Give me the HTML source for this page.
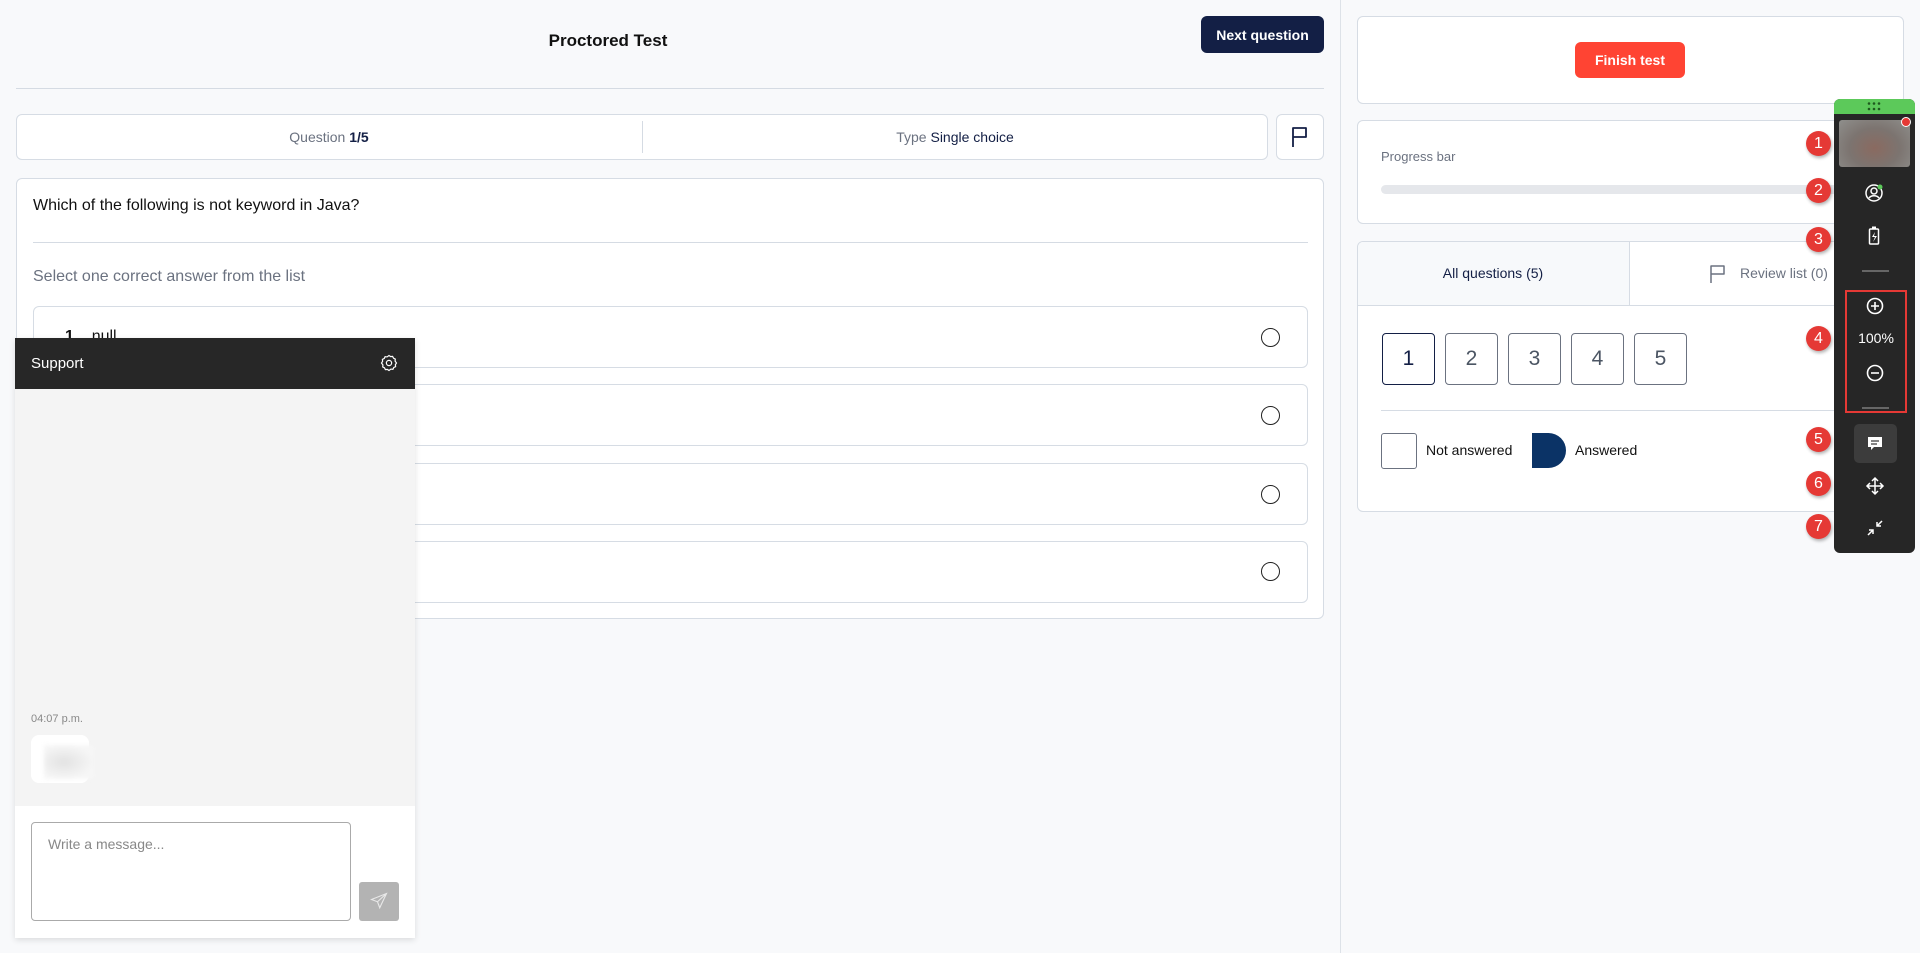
<!DOCTYPE html>
<html><head><meta charset="utf-8"><style>
*{box-sizing:border-box;margin:0;padding:0}
body{width:1920px;height:953px;overflow:hidden;background:#f8f9fb;font-family:"Liberation Sans",Arial,sans-serif;position:relative;color:#111}
.a{position:absolute}
.card{position:absolute;background:#fff;border:1px solid #d6dce4;border-radius:6px}
.radio{position:absolute;left:1261px;width:19px;height:19px;border:1.5px solid #222;border-radius:50%}
.nb{position:absolute;top:333px;width:53px;height:52px;border:1.5px solid #6b7280;border-radius:4px;display:flex;align-items:center;justify-content:center;font-size:21px;color:#4b5563}
.badge{position:absolute;left:1806px;width:25px;height:25px;border-radius:50%;background:#e53935;color:#fff;font-size:16px;display:flex;align-items:center;justify-content:center;box-shadow:1px 2px 3px rgba(0,0,0,.3)}
</style></head><body>
<div class="a" style="left:1340px;top:0;width:1px;height:953px;background:#dde2e8"></div>
<div class="a" style="left:0;width:1216px;top:31px;text-align:center;font-size:17px;font-weight:bold">Proctored Test</div>
<div class="a" style="left:1201px;top:16px;width:123px;height:37px;background:#131f45;border-radius:6px;color:#fff;font-size:14px;font-weight:bold;display:flex;align-items:center;justify-content:center">Next question</div>
<div class="a" style="left:16px;top:88px;width:1308px;height:1px;background:#d5dbe3"></div>

<div class="card" style="left:16px;top:114px;width:1252px;height:46px"></div>
<div class="a" style="left:642px;top:121px;width:1px;height:32px;background:#d5dbe3"></div>
<div class="a" style="left:16px;width:626px;top:129px;text-align:center;font-size:14px;color:#6b7280">Question <span style="color:#131f45;font-weight:bold">1/5</span></div>
<div class="a" style="left:642px;width:626px;top:129px;text-align:center;font-size:14px;color:#6b7280">Type <span style="color:#131f45">Single choice</span></div>
<div class="card" style="left:1276px;top:114px;width:48px;height:46px"></div>
<svg class="a" style="left:1290px;top:126px" width="20" height="22" viewBox="0 0 20 22"><path d="M3 21V2h13v9H3" fill="none" stroke="#131f45" stroke-width="1.8" stroke-linejoin="round"/></svg>

<div class="card" style="left:16px;top:178px;width:1308px;height:441px"></div>
<div class="a" style="left:33px;top:197px;font-size:16px;color:#111">Which of the following is not keyword in Java?</div>
<div class="a" style="left:33px;top:242px;width:1275px;height:1px;background:#d5dbe3"></div>
<div class="a" style="left:33px;top:268px;font-size:16px;color:#6b7280">Select one correct answer from the list</div>
<div class="card" style="left:33px;top:306px;width:1275px;height:62px"></div>
<div class="card" style="left:33px;top:384px;width:1275px;height:62px"></div>
<div class="card" style="left:33px;top:463px;width:1275px;height:62px"></div>
<div class="card" style="left:33px;top:541px;width:1275px;height:62px"></div>
<div class="a" style="left:65px;top:328px;font-size:16px"><b>1</b>&nbsp;&nbsp;&nbsp;&nbsp;null</div>
<div class="radio" style="top:328px"></div>
<div class="radio" style="top:406px"></div>
<div class="radio" style="top:485px"></div>
<div class="radio" style="top:562px"></div>

<!-- support -->
<div class="a" style="left:15px;top:338px;width:400px;height:600px;background:#f4f4f4;box-shadow:0 2px 6px rgba(0,0,0,.12)"></div>
<div class="a" style="left:15px;top:338px;width:400px;height:51px;background:#272727"></div>
<div class="a" style="left:31px;top:355px;color:#fff;font-size:15px">Support</div>
<svg class="a" style="left:380px;top:354px" width="18" height="18" viewBox="0 0 24 24" fill="none" stroke="#fff" stroke-width="1.6"><path d="M12 2l2.2 1.5 2.6-.3 1.2 2.4 2.4 1.2-.3 2.6L22 12l-1.5 2.2.3 2.6-2.4 1.2-1.2 2.4-2.6-.3L12 22l-2.2-1.5-2.6.3-1.2-2.4-2.4-1.2.3-2.6L2 12l1.5-2.2-.3-2.6 2.4-1.2 1.2-2.4 2.6.3z"/><circle cx="12" cy="12" r="3.5"/></svg>
<div class="a" style="left:31px;top:713px;font-size:11px;color:#888">04:07 p.m.</div>
<div class="a" style="left:31px;top:735px;width:58px;height:48px;background:#fff;border-radius:8px"></div>
<div class="a" style="left:44px;top:745px;width:50px;height:34px;background:radial-gradient(ellipse at 40% 50%,#e2e2e2,#f6f6f6 70%);filter:blur(2px)"></div>
<div class="a" style="left:15px;top:806px;width:400px;height:132px;background:#fff"></div>
<div class="a" style="left:31px;top:822px;width:320px;height:99px;border:1px solid #aaa;border-radius:4px"></div>
<div class="a" style="left:48px;top:836px;font-size:14px;color:#888">Write a message...</div>
<div class="a" style="left:359px;top:882px;width:40px;height:39px;background:#b3b3b3;border-radius:3px"></div>
<svg class="a" style="left:370px;top:892px" width="18" height="18" viewBox="0 0 24 24" fill="none" stroke="#e8e8e8" stroke-width="1.5"><path d="M22 2L2 10l8 3 3 8zM10 13l12-11"/></svg>

<!-- right -->
<div class="card" style="left:1357px;top:16px;width:547px;height:88px"></div>
<div class="a" style="left:1575px;top:42px;width:110px;height:36px;background:#ff4433;border-radius:6px;color:#fff;font-weight:bold;font-size:14px;display:flex;align-items:center;justify-content:center">Finish test</div>
<div class="card" style="left:1357px;top:120px;width:547px;height:104px"></div>
<div class="a" style="left:1381px;top:149px;font-size:13px;color:#6b7280">Progress bar</div>
<div class="a" style="left:1381px;top:185px;width:500px;height:9px;background:#e5e7eb;border-radius:5px"></div>
<div class="card" style="left:1357px;top:241px;width:547px;height:271px;overflow:hidden">
<div class="a" style="left:0;top:0;width:272px;height:64px;background:#f7f9fb;border-right:1px solid #d6dce4;border-bottom:1px solid #d6dce4"></div>
<div class="a" style="left:272px;top:63px;width:280px;height:1px;background:#d6dce4"></div>
</div>
<div class="a" style="left:1357px;width:272px;top:265px;text-align:center;font-size:14px;color:#131f45">All questions (5)</div>
<svg class="a" style="left:1709px;top:264px" width="18" height="20" viewBox="0 0 18 20"><path d="M2 19V2h13v8H2" fill="none" stroke="#6b7280" stroke-width="1.5" stroke-linejoin="round"/></svg>
<div class="a" style="left:1740px;top:265px;font-size:14px;color:#6b7280">Review list (0)</div>
<div class="nb" style="left:1382px;border-color:#131f45;color:#131f45">1</div>
<div class="nb" style="left:1445px">2</div>
<div class="nb" style="left:1508px">3</div>
<div class="nb" style="left:1571px">4</div>
<div class="nb" style="left:1634px">5</div>
<div class="a" style="left:1381px;top:410px;width:523px;height:1px;background:#d6dce4"></div>
<div class="a" style="left:1381px;top:433px;width:36px;height:36px;border:1px solid #6b7280;border-radius:3px"></div>
<div class="a" style="left:1426px;top:442px;font-size:14px;color:#111">Not answered</div>
<div class="a" style="left:1532px;top:433px;width:34px;height:35px;background:#0b3366;border-radius:0 18px 18px 0"></div>
<div class="a" style="left:1575px;top:442px;font-size:14px;color:#111">Answered</div>

<!-- toolbar -->
<div class="a" style="left:1834px;top:99px;width:81px;height:454px;background:#262626;border-radius:6px;overflow:hidden">
<div style="height:15px;background:#5cc95a"></div></div>
<svg class="a" style="left:1866px;top:101px" width="16" height="11"><g fill="#1e5a1e"><circle cx="3" cy="2.5" r="1.3"/><circle cx="8" cy="2.5" r="1.3"/><circle cx="13" cy="2.5" r="1.3"/><circle cx="3" cy="8" r="1.3"/><circle cx="8" cy="8" r="1.3"/><circle cx="13" cy="8" r="1.3"/></g></svg>
<div class="a" style="left:1839px;top:120px;width:71px;height:47px;border-radius:3px;background:radial-gradient(ellipse at 50% 60%,#8a6a60,#7c7470 50%,#8f8f8c)"></div>
<div class="a" style="left:1901px;top:117px;width:10px;height:10px;border-radius:50%;background:#e53935;border:1.5px solid #fff"></div>
<svg class="a" style="left:1864px;top:183px" width="20" height="20" viewBox="0 0 20 20" fill="none" stroke="#fff" stroke-width="1.5"><circle cx="10" cy="10" r="8"/><circle cx="10" cy="8" r="3"/><path d="M5 15c2-3 8-3 10 0"/><circle cx="16" cy="4" r="2.5" fill="#5cc95a" stroke="none"/></svg>
<svg class="a" style="left:1868px;top:226px" width="12" height="20" viewBox="0 0 12 20"><rect x="4" y="0.5" width="4" height="2" fill="#fff"/><rect x="1.5" y="3" width="9" height="15" rx="1" fill="none" stroke="#fff" stroke-width="1.5"/><path d="M7 6L4 11h3l-2 5 4-6H6z" fill="#fff"/></svg>
<div class="a" style="left:1862px;top:270px;width:27px;height:2px;background:#666"></div>
<div class="a" style="left:1845px;top:290px;width:62px;height:123px;border:2px solid #e53935"></div>
<svg class="a" style="left:1866px;top:297px" width="18" height="18" viewBox="0 0 18 18" fill="none" stroke="#fff" stroke-width="1.6"><circle cx="9" cy="9" r="7.5"/><path d="M9 5v8M5 9h8"/></svg>
<div class="a" style="left:1845px;width:62px;top:330px;text-align:center;color:#fff;font-size:14px">100%</div>
<svg class="a" style="left:1866px;top:364px" width="18" height="18" viewBox="0 0 18 18" fill="none" stroke="#fff" stroke-width="1.6"><circle cx="9" cy="9" r="7.5"/><path d="M5 9h8"/></svg>
<div class="a" style="left:1862px;top:407px;width:27px;height:2px;background:#666"></div>
<div class="a" style="left:1854px;top:424px;width:43px;height:39px;background:#3c3c3c;border-radius:5px"></div>
<svg class="a" style="left:1866px;top:435px" width="18" height="18" viewBox="0 0 18 18"><path d="M2 2h14v10H8l-3 3v-3H2z" fill="#fff"/><path d="M5 6h8M5 9h6" stroke="#3c3c3c" stroke-width="1.3"/></svg>
<svg class="a" style="left:1865px;top:476px" width="20" height="20" viewBox="0 0 20 20" fill="none" stroke="#fff" stroke-width="1.5"><path d="M10 2v16M2 10h16M7 5l3-3 3 3M7 15l3 3 3-3M5 7l-3 3 3 3M15 7l3 3-3 3"/></svg>
<svg class="a" style="left:1866px;top:519px" width="18" height="18" viewBox="0 0 18 18" fill="none" stroke="#fff" stroke-width="1.5"><path d="M2 16l5-5M3 11h4v4M16 2l-5 5M11 3v4h4"/></svg>

<div class="badge" style="top:131px">1</div>
<div class="badge" style="top:178px">2</div>
<div class="badge" style="top:227px">3</div>
<div class="badge" style="top:326px">4</div>
<div class="badge" style="top:427px">5</div>
<div class="badge" style="top:471px">6</div>
<div class="badge" style="top:514px">7</div>
</body></html>
